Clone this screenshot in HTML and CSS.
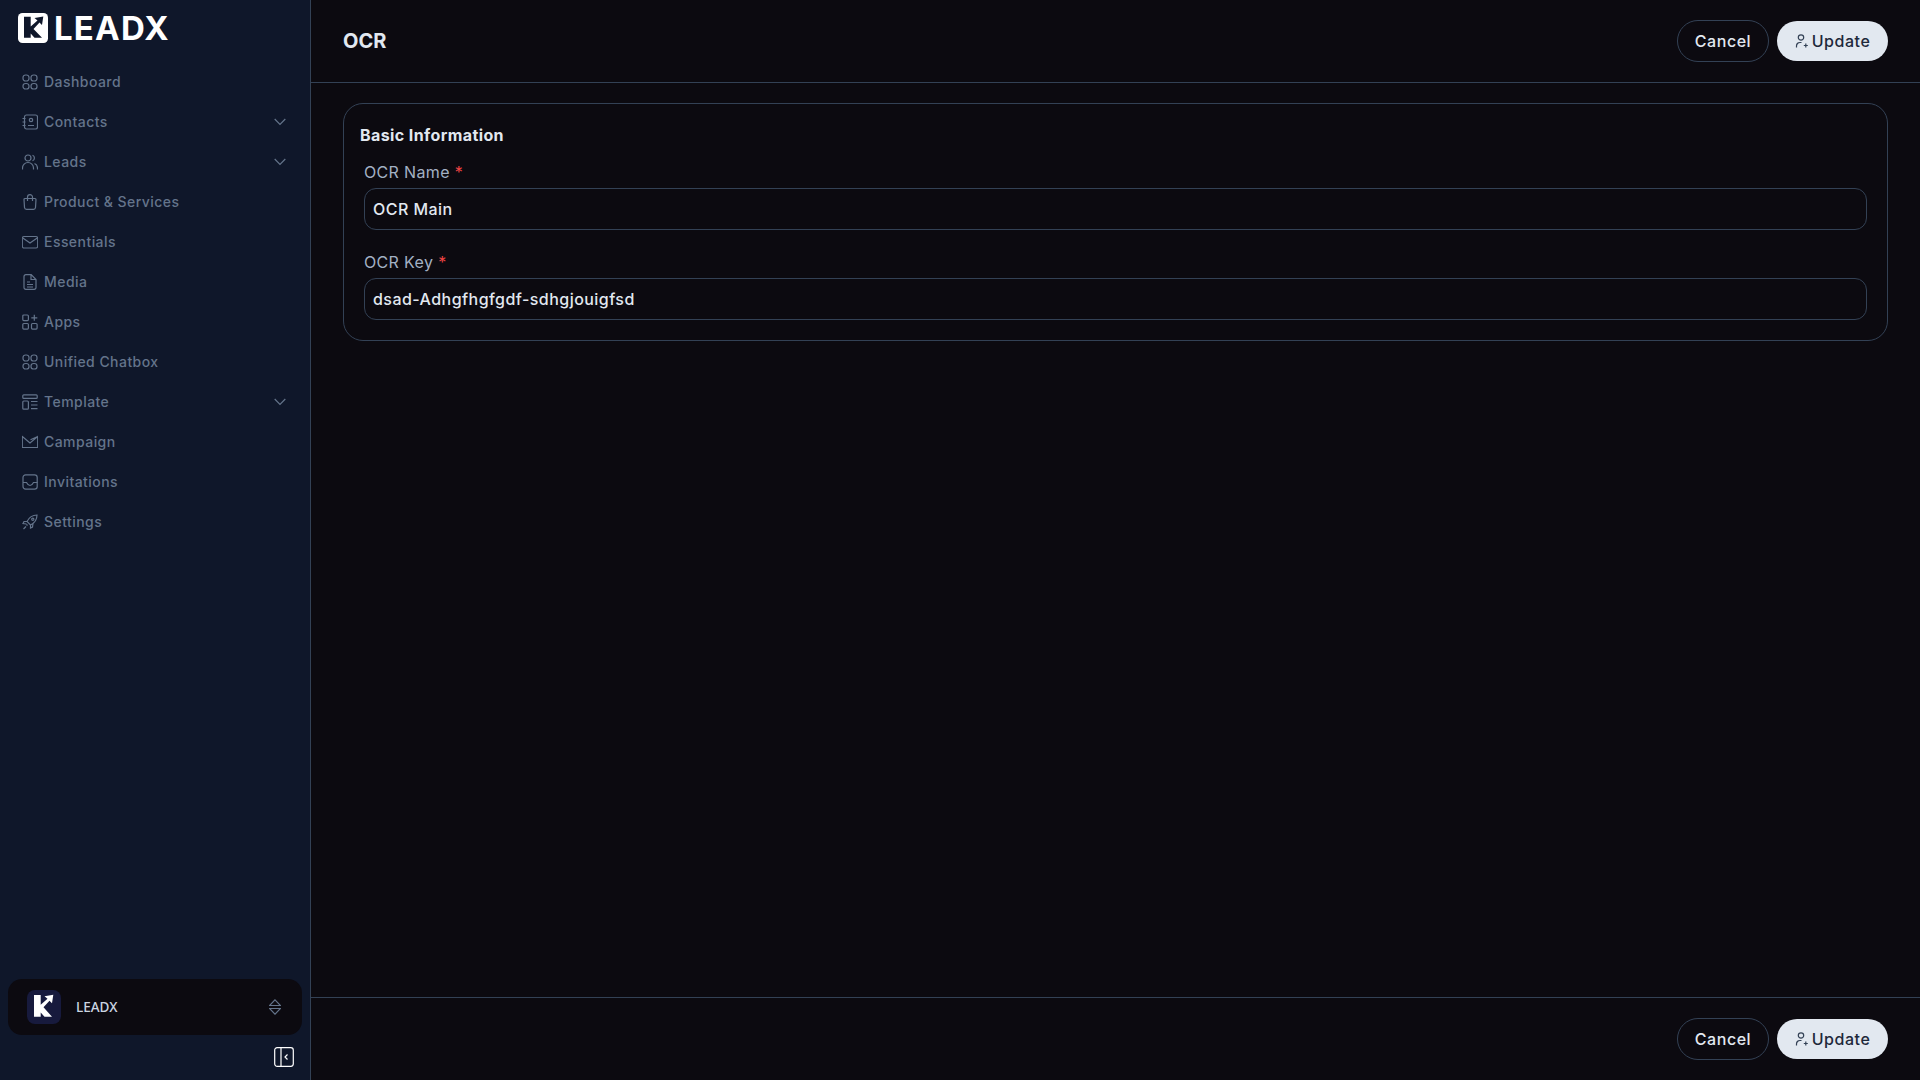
FILE: index.html
```html
<!DOCTYPE html>
<html lang="en">
<head>
<meta charset="utf-8">
<title>OCR</title>
<link rel="stylesheet" href="styles.css">
</head>
<body>
<aside class="sidebar">
  <div class="brand">
    <svg class="brand-mark" viewBox="0 0 30 30"><rect width="30" height="30" rx="4.500" fill="#fff"/><path d="M6 3.700h6.700v9.800l6.800-6-3-2.500 8.800-1.500L24 12l-2.500-2.500-6 6.500 8.500 8.700h-7.500l-3.800-4.200v4.200H6z" fill="#0f172a"/></svg>
    <span class="brand-name">LEADX</span>
  </div>
  <nav class="nav">
    <a class="nav-item"><svg class="nav-icon" viewBox="0 0 16 16"><rect x="1" y="1" width="6" height="6" rx="2.600"/><rect x="9" y="1" width="6" height="6" rx="2.600"/><rect x="1" y="9.500" width="6" height="5.500" rx="2.600"/><rect x="9" y="9.500" width="6" height="5.500" rx="2.600"/></svg><span class="nav-label">Dashboard</span></a>
    <a class="nav-item"><svg class="nav-icon" viewBox="0 0 16 16"><rect x="2.500" y="1" width="13" height="14" rx="2"/><circle cx="9" cy="6" r="1.700"/><path d="M6 11.500h6M.5 4.500h3M.5 8h3M.5 11.500h3"/></svg><span class="nav-label">Contacts</span><svg class="chevron" viewBox="0 0 12 8"><path d="M.7 1l5.300 5.300L11.300 1"/></svg></a>
    <a class="nav-item"><svg class="nav-icon" viewBox="0 0 16 16"><circle cx="6" cy="4" r="3"/><path d="M.5 15.500v-1.500a5 5 0 0 1 11 0v1.500M10.500 1.200a3 3 0 0 1 0 5.600M12.500 9.500a5 5 0 0 1 3 4.500v1.500"/></svg><span class="nav-label">Leads</span><svg class="chevron" viewBox="0 0 12 8"><path d="M.7 1l5.300 5.300L11.300 1"/></svg></a>
    <a class="nav-item"><svg class="nav-icon" viewBox="0 0 16 16"><path d="M3 4.500h10a1 1 0 0 1 1 1l-.5 8a2 2 0 0 1-2 1.800h-7a2 2 0 0 1-2-1.800L2 5.500a1 1 0 0 1 1-1zM5.500 7V3.200a2.500 2.500 0 0 1 5 0V7"/></svg><span class="nav-label">Product &amp; Services</span></a>
    <a class="nav-item"><svg class="nav-icon" viewBox="0 0 16 16"><rect x=".3" y="2.500" width="15.400" height="11.500" rx="1.800"/><path d="M.8 4l7.200 5 7.200-5"/></svg><span class="nav-label">Essentials</span></a>
    <a class="nav-item"><svg class="nav-icon" viewBox="0 0 16 16"><path d="M2 2.500A1.800 1.800 0 0 1 3.800.7h5.400L14 5.500v8a1.800 1.800 0 0 1-1.800 1.800H3.800A1.800 1.800 0 0 1 2 13.500zM9 1v4.500h5M5 8h3M5 10.500h6M5 13h6"/></svg><span class="nav-label">Media</span></a>
    <a class="nav-item"><svg class="nav-icon" viewBox="0 0 16 16"><rect x=".8" y="1" width="5.600" height="5.600" rx="1"/><rect x=".8" y="9.500" width="5.600" height="5.600" rx="1"/><rect x="9.500" y="9.500" width="5.600" height="5.600" rx="1"/><path d="M12.300 .8v6M9.300 3.800h6"/></svg><span class="nav-label">Apps</span></a>
    <a class="nav-item"><svg class="nav-icon" viewBox="0 0 16 16"><rect x="1" y="1" width="6" height="6" rx="2.600"/><rect x="9" y="1" width="6" height="6" rx="2.600"/><rect x="1" y="9.500" width="6" height="5.500" rx="2.600"/><rect x="9" y="9.500" width="6" height="5.500" rx="2.600"/></svg><span class="nav-label">Unified Chatbox</span></a>
    <a class="nav-item"><svg class="nav-icon" viewBox="0 0 16 16"><rect x=".8" y=".8" width="14.400" height="3.600" rx="1"/><rect x=".8" y="7" width="5.600" height="8.200" rx="1"/><path d="M9 7.500h6.500M9 11h6.500M9 14.700h6.500"/></svg><span class="nav-label">Template</span><svg class="chevron" viewBox="0 0 12 8"><path d="M.7 1l5.300 5.300L11.300 1"/></svg></a>
    <a class="nav-item"><svg class="nav-icon" viewBox="0 0 16 16"><path d="M.3 2.500v11h15.400V2.500L8 9zM.3 2.500L8 9M15.700 2.500L8.500 5.800"/></svg><span class="nav-label">Campaign</span></a>
    <a class="nav-item"><svg class="nav-icon" viewBox="0 0 16 16"><rect x="1" y=".8" width="14.200" height="14.400" rx="2.600"/><path d="M1 8.500h3.500c1 2 2 3 3.500 3s2.500-1 3.500-3h4"/></svg><span class="nav-label">Invitations</span></a>
    <a class="nav-item"><svg class="nav-icon" viewBox="0 0 16 16"><path d="M5 7.500C7 3.500 10.500 1 15 1c0 4.500-2.500 8-6.500 10zM5 7.500H2L1 9.500l3.500.5M8.500 11v3l2-1 .5-3.500M4.500 10.500l1 1M4 12.500l-2.500 2.500"/><circle cx="10.800" cy="5.300" r="1.100"/></svg><span class="nav-label">Settings</span></a>
  </nav>
  <div class="org">
    <div class="org-logo"><svg viewBox="0 0 34 34" width="34" height="34"><rect width="34" height="34" rx="8" fill="#171a3d"/><path d="M7 5h6.700v9.800l6.800-6-3-2.500 8.800-1.500L25 13.300l-2.500-2.500-6 6.500 8.500 9.400h-7.500l-3.800-4.200v4.200H7z" fill="#fff"/></svg></div>
    <span class="org-name">LEADX</span>
    <svg class="org-sort" viewBox="0 0 12 16"><path d="M6 .8l5.500 5.700H.5zM.5 9.500h11L6 15.200z"/></svg>
  </div>
  <div class="collapse-row">
    <svg class="collapse" viewBox="0 0 20 20"><rect x=".7" y=".7" width="18.600" height="18.600" rx="2.500"/><path d="M7 .7v18.600M13.500 7.500L11 10l2.500 2.500"/></svg>
  </div>
</aside>
<main class="main">
  <header class="bar bar-top">
    <h1 class="title">OCR</h1>
    <div class="actions">
      <button class="btn btn-ghost">Cancel</button>
      <button class="btn btn-solid"><svg class="btn-icon" viewBox="0 0 14 14"><circle cx="6" cy="3.500" r="2.700"/><path d="M1.500 13.500v-1.500a3.500 3.500 0 0 1 3.500-3.500h1.500M10.800 9.500v4M8.800 11.500h4"/></svg>Update</button>
    </div>
  </header>
  <section class="content">
    <div class="card">
      <h2 class="card-title">Basic Information</h2>
      <div class="field">
        <label class="label">OCR Name <span class="req">*</span></label>
        <div class="input">OCR Main</div>
      </div>
      <div class="field">
        <label class="label">OCR Key <span class="req">*</span></label>
        <div class="input">dsad-Adhgfhgfgdf-sdhgjouigfsd</div>
      </div>
    </div>
  </section>
  <footer class="bar bar-bottom">
    <div class="actions">
      <button class="btn btn-ghost">Cancel</button>
      <button class="btn btn-solid"><svg class="btn-icon" viewBox="0 0 14 14"><circle cx="6" cy="3.500" r="2.700"/><path d="M1.500 13.500v-1.500a3.500 3.500 0 0 1 3.500-3.500h1.500M10.800 9.500v4M8.800 11.500h4"/></svg>Update</button>
    </div>
  </footer>
</main>
</body>
</html>
```
FILE: styles.css
```css
* { box-sizing: border-box; }
html, body { margin: 0; height: 100%; }
body {
  display: flex;
  height: 1080px;
  overflow: hidden;
  background: #0c0a10;
  font-family: Inter, "Noto Sans", sans-serif;
  color: #e2e8f0;
}
.sidebar {
  width: 311px;
  flex: none;
  display: flex;
  flex-direction: column;
  background: #0f172a;
  border-right: 1px solid #334155;
}
.brand {
  height: 62px;
  padding: 13px 0 0 18px;
  display: flex;
  align-items: flex-start;
  gap: 6px;
}
.brand-mark { width: 30px; height: 30px; flex: none; }
.brand-name {
  font-size: 33px;
  line-height: 30px;
  font-weight: 700;
  color: #fff;
  letter-spacing: 1.200px;
}
.nav { display: flex; flex-direction: column; flex: 1; }
.nav-item {
  height: 40px;
  padding: 0 24px 0 22px;
  display: flex;
  align-items: center;
  gap: 6px;
  color: #64748b;
}
.nav-icon {
  width: 16px;
  height: 16px;
  flex: none;
  fill: none;
  stroke: #64748b;
  stroke-width: 1.200;
}
.nav-label {
  flex: 1;
  padding-bottom: 1px;
  font-size: 14px;
  font-weight: 500;
  letter-spacing: .45px;
}
.chevron {
  width: 12px;
  height: 8px;
  flex: none;
  fill: none;
  stroke: #64748b;
  stroke-width: 1.200;
}
.org {
  height: 56px;
  margin: 0 8px;
  padding: 0 20px 0 19px;
  display: flex;
  align-items: center;
  background: #0c0a10;
  border-radius: 14px;
}
.org-logo { width: 34px; height: 34px; flex: none; }
.org-name {
  flex: 1;
  margin-left: 15px;
  font-family: "Noto Sans", sans-serif;
  font-size: 13.500px;
  font-weight: 500;
  color: #cbd5e1;
}
.org-sort {
  width: 12px;
  height: 16px;
  margin-right: 1px;
  fill: none;
  stroke: #64748b;
  stroke-width: 1.200;
}
.collapse-row {
  height: 45px;
  padding: 12px 16px 0 0;
  display: flex;
  justify-content: flex-end;
  align-items: flex-start;
}
.collapse {
  width: 20px;
  height: 20px;
  fill: none;
  stroke: #fff;
  stroke-width: 1.200;
}
.main {
  flex: 1;
  min-width: 0;
  display: flex;
  flex-direction: column;
}
.bar {
  flex: none;
  padding: 0 32px;
  display: flex;
  align-items: center;
}
.bar-top {
  height: 83px;
  justify-content: space-between;
  border-bottom: 1px solid #334155;
}
.bar-bottom {
  height: 83px;
  justify-content: flex-end;
  border-top: 1px solid #334155;
}
.title {
  margin: 0;
  font-size: 20px;
  font-weight: 700;
  color: #e2e8f0;
}
.actions { display: flex; align-items: center; gap: 8px; }
.btn {
  height: 40px;
  border-radius: 21px;
  font-family: inherit;
  font-size: 16px;
  font-weight: 500;
  display: flex;
  align-items: center;
  justify-content: center;
  padding: 0 0 1px;
  letter-spacing: .55px;
}
.btn-ghost {
  width: 92px;
  height: 42px;
  background: transparent;
  border: 1px solid #334155;
  color: #e2e8f0;
}
.btn-solid {
  width: 111px;
  gap: 3px;
  background: #e2e8f0;
  border: none;
  color: #1e293b;
}
.btn-icon {
  width: 14px;
  height: 14px;
  margin-top: 1px;
  fill: none;
  stroke: #334155;
  stroke-width: 1.200;
}
.content {
  flex: 1;
  padding: 20px 32px;
}
.card {
  height: 238px;
  border: 1px solid #334155;
  border-radius: 20px;
  padding: 21px 20px 20px 16px;
}
.card-title {
  margin: 0 0 14px;
  font-size: 16px;
  line-height: 21px;
  font-weight: 700;
  letter-spacing: .4px;
  color: #e2e8f0;
}
.field { margin: 0 0 20px 4px; }
.field:last-child { margin-bottom: 0; }
.label {
  display: block;
  font-size: 16px;
  line-height: 24px;
  margin-bottom: 4px;
  color: #a3b1c4;
  letter-spacing: .35px;
}
.req { color: #ef4444; }
.input {
  height: 42px;
  padding: 0 8px;
  display: flex;
  align-items: center;
  border: 1px solid #334155;
  border-radius: 12px;
  font-size: 16px;
  font-weight: 500;
  letter-spacing: .45px;
  color: #e2e8f0;
}
```
